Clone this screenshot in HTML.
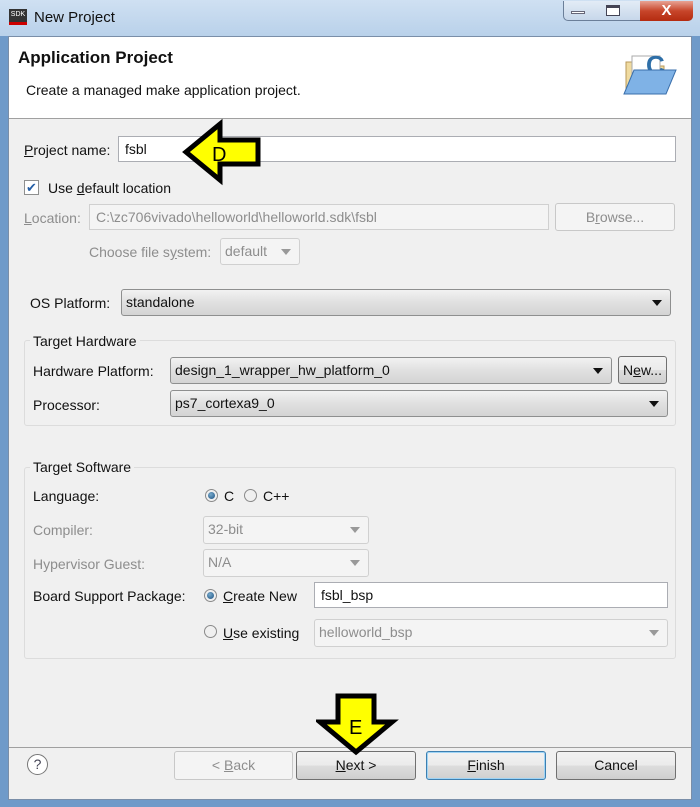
<!DOCTYPE html>
<html><head><meta charset="utf-8"><style>
*{box-sizing:border-box;margin:0;padding:0}
body{width:700px;height:807px;overflow:hidden;font-family:"Liberation Sans",sans-serif;font-size:14px;color:#111;background:#6f9ac9;position:relative}
.a{position:absolute}
.t{position:absolute;white-space:nowrap;line-height:18px}
.g{color:#8d8d8d}
.box{position:absolute;border:1px solid #abadb3;background:#fff;padding-left:6px;line-height:24px;white-space:nowrap}
.dis{background:#f4f4f4;border-color:#d0d0d0;color:#8d8d8d}
.cb{position:absolute;border:1px solid #8e8f8f;border-radius:3px;background:linear-gradient(#f2f2f2,#e0e0e0 50%,#d4d4d4);padding-left:4px;line-height:25px;white-space:nowrap}
.cb:after{content:"";position:absolute;right:8px;top:10px;border-left:5px solid transparent;border-right:5px solid transparent;border-top:6px solid #111}
.cbd{background:#f4f4f4;border-color:#d0d0d0;color:#8d8d8d}
.cbd:after{border-top-color:#999}
.btn{position:absolute;border:1px solid #707070;border-radius:3px;background:linear-gradient(#f2f2f2,#ebebeb 50%,#dddddd 51%,#cfcfcf);text-align:center;line-height:27px}
.grp{position:absolute;border:1px solid #dcdcdc;border-radius:3px}
.rad{position:absolute;width:13px;height:13px;border-radius:50%;border:1px solid #8a8a8a;background:#f0f0f0}
.rad.on:after{content:"";position:absolute;left:2px;top:2px;width:7px;height:7px;border-radius:50%;background:radial-gradient(circle at 40% 35%,#7ac,#1c5080)}
u{text-decoration:underline}
</style></head><body>
<div class="a" style="left:0;top:0;width:700px;height:36px;background:linear-gradient(#cfe0f2,#b9d1ea)"></div>
<div class="a" style="left:9px;top:9px;width:18px;height:16px;background:#333;color:#fff;font-size:7px;line-height:12px;text-align:center;border-bottom:3px solid #c00">SDK</div>
<div class="t" style="left:34px;top:9px;font-size:15px">New Project</div>
<div class="a" style="left:563px;top:1px;width:130px;height:20px;border:1px solid #6b7f99;border-top:none;border-radius:0 0 5px 5px;background:linear-gradient(#e3ecf6,#c7d7ea)"></div>
<div class="a" style="left:640px;top:1px;width:53px;height:20px;border-radius:0 0 5px 0;background:linear-gradient(#e8a394,#c7452a 50%,#b42b10);color:#fff;text-align:center;font-weight:bold;font-size:15px;line-height:19px">X</div>
<div class="a" style="left:571px;top:11px;width:14px;height:3px;background:#fff;border:1px solid #667"></div>
<div class="a" style="left:606px;top:5px;width:14px;height:11px;border:1px solid #445;background:#fff;border-top-width:3px"></div>
<div class="a" style="left:8px;top:36px;width:684px;height:764px;background:#f0f0f0;border:1px solid #7a8ea8"></div>
<div class="a" style="left:9px;top:37px;width:682px;height:82px;background:#fff;border-bottom:1px solid #a0a0a0"></div>
<div class="t" style="left:18px;top:49px;font-size:17px;font-weight:bold">Application Project</div>
<div class="t" style="left:26px;top:81px">Create a managed make application project.</div>
<svg class="a" style="left:618px;top:44px" width="62" height="56"><path d="M8 18h14l4 4h20v26H8z" fill="#f0dba0" stroke="#b8985a"/><path d="M14 12h28v20H14z" fill="#fff" stroke="#aaa"/><text x="28" y="30" font-family="Liberation Sans" font-weight="bold" font-size="26" fill="#2e6fa8">C</text><path d="M6 50l10-24h42l-10 24z" fill="#7fb2e6" stroke="#3a6fab"/></svg>

<div class="t" style="left:24px;top:141px"><u>P</u>roject name:</div>
<div class="box" style="left:118px;top:136px;width:558px;height:26px">fsbl</div>
<div class="a" style="left:24px;top:180px;width:15px;height:15px;border:1px solid #8e8f8f;background:#fff;color:#245ea6;font-size:13px;line-height:13px;text-align:center">✔</div>
<div class="t" style="left:48px;top:179px">Use <u>d</u>efault location</div>
<div class="t g" style="left:24px;top:209px"><u>L</u>ocation:</div>
<div class="box dis" style="left:89px;top:204px;width:460px;height:26px">C:\zc706vivado\helloworld\helloworld.sdk\fsbl</div>
<div class="btn" style="left:555px;top:203px;width:120px;height:28px;border-color:#c8c8c8;background:#f4f4f4;color:#8d8d8d">B<u>r</u>owse...</div>
<div class="t g" style="left:89px;top:243px">Choose file s<u>y</u>stem:</div>
<div class="cb cbd" style="left:220px;top:238px;width:80px;height:27px">default</div>

<div class="t" style="left:30px;top:294px">OS Platform:</div>
<div class="cb" style="left:121px;top:289px;width:550px;height:27px">standalone</div>

<div class="grp" style="left:24px;top:340px;width:652px;height:86px"></div>
<div class="t" style="left:30px;top:332px;background:#f0f0f0;padding:0 3px">Target Hardware</div>
<div class="t" style="left:33px;top:362px">Hardware Platform:</div>
<div class="cb" style="left:170px;top:357px;width:442px;height:27px">design_1_wrapper_hw_platform_0</div>
<div class="btn" style="left:618px;top:356px;width:49px;height:28px">N<u>e</u>w...</div>
<div class="t" style="left:33px;top:396px">Processor:</div>
<div class="cb" style="left:170px;top:390px;width:498px;height:27px">ps7_cortexa9_0</div>

<div class="grp" style="left:24px;top:467px;width:652px;height:192px"></div>
<div class="t" style="left:30px;top:458px;background:#f0f0f0;padding:0 3px">Target Software</div>
<div class="t" style="left:33px;top:487px">Language:</div>
<div class="rad on" style="left:205px;top:489px"></div>
<div class="t" style="left:224px;top:487px">C</div>
<div class="rad" style="left:244px;top:489px"></div>
<div class="t" style="left:263px;top:487px">C++</div>
<div class="t g" style="left:33px;top:521px">Compiler:</div>
<div class="cb cbd" style="left:203px;top:516px;width:166px;height:28px">32-bit</div>
<div class="t g" style="left:33px;top:555px">Hypervisor Guest:</div>
<div class="cb cbd" style="left:203px;top:549px;width:166px;height:28px">N/A</div>
<div class="t" style="left:33px;top:587px">Board Support Package:</div>
<div class="rad on" style="left:204px;top:589px"></div>
<div class="t" style="left:223px;top:587px"><u>C</u>reate New</div>
<div class="box" style="left:314px;top:582px;width:354px;height:26px">fsbl_bsp</div>
<div class="rad" style="left:204px;top:625px"></div>
<div class="t" style="left:223px;top:624px"><u>U</u>se existing</div>
<div class="cb cbd" style="left:314px;top:619px;width:354px;height:28px">helloworld_bsp</div>

<div class="a" style="left:9px;top:747px;width:682px;border-top:1px solid #a0a0a0"></div>
<div class="a" style="left:27px;top:754px;width:21px;height:21px;border-radius:50%;border:1px solid #777;text-align:center;line-height:19px;font-size:14px;color:#445;background:#fff">?</div>
<div class="btn" style="left:174px;top:751px;width:119px;height:29px;border-color:#c8c8c8;background:#f4f4f4;color:#8d8d8d">&lt; <u>B</u>ack</div>
<div class="btn" style="left:296px;top:751px;width:120px;height:29px"><u>N</u>ext &gt;</div>
<div class="btn" style="left:426px;top:751px;width:120px;height:29px;border-color:#3c7fb1;box-shadow:inset 0 0 0 1px #9fd4f5"><u>F</u>inish</div>
<div class="btn" style="left:556px;top:751px;width:120px;height:29px">Cancel</div>

<svg class="a" style="left:180px;top:118px" width="82" height="68"><path d="M6 34L40 6V22H78V46H40V62Z" fill="#ffff00" stroke="#000" stroke-width="5" stroke-linejoin="miter"/><text x="32" y="43" font-family="Liberation Sans" font-size="20" fill="#000">D</text></svg>
<svg class="a" style="left:316px;top:692px" width="84" height="64"><path d="M22 4H58V30H76L40 60L4 30H22Z" fill="#ffff00" stroke="#000" stroke-width="5" stroke-linejoin="miter"/><text x="33" y="42" font-family="Liberation Sans" font-size="20" fill="#000">E</text></svg>
</body></html>
